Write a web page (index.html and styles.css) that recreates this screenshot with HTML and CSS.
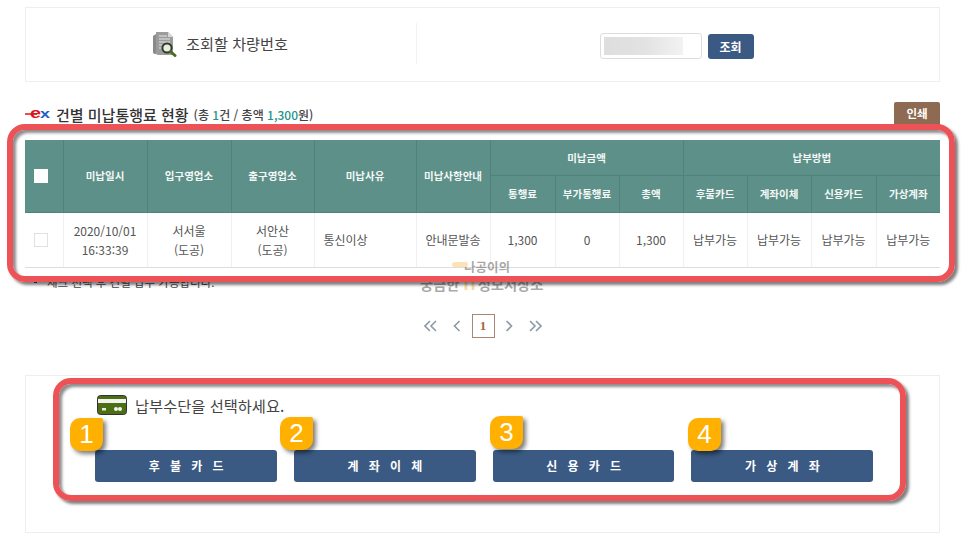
FILE: index.html
```html
<!DOCTYPE html>
<html lang="ko">
<head>
<meta charset="utf-8">
<title>미납통행료 조회</title>
<link rel="stylesheet" href="styles.css">
</head>
<body>
<main class="page">
  <section class="search">
    <div class="search-label">
      <svg class="doc-icon" width="26" height="26" viewBox="0 0 26 26">
        <path d="M1 5l3-2v20H3q-2 0-2-2z" fill="#8a8a8a"/>
        <path d="M4 1h12l5 5v18H6q-2 0-2-2z" fill="#9c9c9c"/>
        <path d="M16 1l5 5h-5z" fill="#d8d8d8"/>
        <path d="M7 5h8M7 8h11M7 11h11M7 14h4M7 17h3" stroke="#e4e4e4" stroke-width="1.2"/>
        <circle cx="15" cy="17" r="4.6" fill="#e8eee2" stroke="#2f3d2a" stroke-width="2"/>
        <path d="M18.5 20.5l4.5 4" stroke="#4a6b2a" stroke-width="3" stroke-linecap="round"/>
      </svg>
      <span>조회할 차량번호</span>
    </div>
    <div class="search-form">
      <div class="search-input"><div class="masked"></div></div>
      <button class="btn-search" type="button">조회</button>
    </div>
  </section>

  <div class="title-row">
    <h2 class="title">
      <svg class="ex-logo" width="25" height="14" viewBox="0 0 25 14">
        <path d="M0 7h12" stroke="#d8141c" stroke-width="1.5"/>
        <text x="5" y="11" class="ex-e" textLength="11" lengthAdjust="spacingAndGlyphs">e</text>
        <text x="15" y="11" class="ex-x" textLength="10" lengthAdjust="spacingAndGlyphs">x</text>
      </svg>
      <span>건별 미납통행료 현황</span>
      <small class="title-sub">(총 <em>1</em>건 / 총액 <em>1,300</em>원)</small>
    </h2>
    <button class="btn-print" type="button">인쇄</button>
  </div>

  <table class="grid">
    <colgroup>
      <col class="c38"><col class="c84"><col class="c84"><col class="c83"><col class="c102"><col class="c74">
      <col class="c65"><col class="c64"><col class="c64"><col class="c64"><col class="c64"><col class="c65"><col class="c64">
    </colgroup>
    <thead>
      <tr class="h1">
        <th rowspan="2"><span class="chk chk-head"></span></th>
        <th rowspan="2">미납일시</th>
        <th rowspan="2">입구영업소</th>
        <th rowspan="2">출구영업소</th>
        <th rowspan="2">미납사유</th>
        <th rowspan="2">미납사항안내</th>
        <th colspan="3">미납금액</th>
        <th colspan="4">납부방법</th>
      </tr>
      <tr class="h2">
        <th>통행료</th><th>부가통행료</th><th>총액</th>
        <th>후불카드</th><th>계좌이체</th><th>신용카드</th><th>가상계좌</th>
      </tr>
    </thead>
    <tbody>
      <tr>
        <td><span class="chk"></span></td>
        <td>2020/10/01<br>16:33:39</td>
        <td>서서울<br>(도공)</td>
        <td>서안산<br>(도공)</td>
        <td class="left">통신이상</td>
        <td>안내문발송</td>
        <td>1,300</td><td>0</td><td>1,300</td>
        <td>납부가능</td><td>납부가능</td><td>납부가능</td><td>납부가능</td>
      </tr>
    </tbody>
  </table>

  <p class="notice"><span class="dot"></span>체크 선택 후 건별 납부 가능합니다.</p>

  <nav class="pager">
    <a class="pg"><svg width="14" height="12" viewBox="0 0 14 12"><path d="M6 1L1 6l5 5M12 1L7 6l5 5"/></svg></a>
    <a class="pg"><svg width="8" height="12" viewBox="0 0 8 12"><path d="M6.5 1L1.5 6l5 5"/></svg></a>
    <a class="pg pg-on">1</a>
    <a class="pg"><svg width="8" height="12" viewBox="0 0 8 12"><path d="M1.5 1l5 5-5 5"/></svg></a>
    <a class="pg"><svg width="14" height="12" viewBox="0 0 14 12"><path d="M2 1l5 5-5 5M8 1l5 5-5 5"/></svg></a>
  </nav>

  <section class="pay">
    <div class="pay-head">
      <svg width="30" height="20" viewBox="0 0 30 20">
        <rect x=".5" y=".5" width="29" height="19" rx="3" fill="#4d6f14" stroke="#333"/>
        <rect x="1" y="4" width="28" height="4" fill="#f2f2f2"/>
        <rect x="5" y="13" width="4" height="2.5" fill="#e8e8e8"/>
        <circle cx="19" cy="14" r="2" fill="#f2f2f2"/><circle cx="23" cy="14" r="2" fill="#f2f2f2"/>
      </svg>
      <span>납부수단을 선택하세요.</span>
    </div>
    <div class="pay-btns">
      <button class="btn-pay" type="button">후 불 카 드</button>
      <button class="btn-pay" type="button">계 좌 이 체</button>
      <button class="btn-pay" type="button">신 용 카 드</button>
      <button class="btn-pay" type="button">가 상 계 좌</button>
    </div>
  </section>
</main>

<div class="marks">
  <div class="wm"><i class="wm-pill"></i><div class="wm-1">나공이의</div><div class="wm-2">궁금한 <b>IT</b>정보저장소</div></div>
  <div class="ring ring-a"></div>
  <div class="ring ring-b"></div>
  <div class="badge b1">1</div>
  <div class="badge b2">2</div>
  <div class="badge b3">3</div>
  <div class="badge b4">4</div>
</div>
</body>
</html>
```
FILE: styles.css
```css
* { box-sizing: border-box; }
html, body { margin: 0; padding: 0; background: #fff; }
body { font-family: "Noto Sans CJK KR", "Noto Sans", sans-serif; color: #444; overflow: hidden; height: 553px; position: relative; }
.page { width: 966px; padding: 7px 26px 0 25px; }

.search { display: flex; align-items: center; height: 75px; border: 1px solid #eee; }
.search-label { width: 391px; height: 41px; border-right: 1px solid #f2f2f2; display: flex; align-items: center; justify-content: center; gap: 8px; font-size: 15.2px; color: #444; margin-top: -3px; }
.doc-icon { margin: 1px 0 0 -2px; }
.search-form { flex: 1; display: flex; justify-content: center; align-items: center; gap: 6px; margin-top: 3px; padding-right: 3px; }
.search-input { width: 102px; height: 26px; border: 1px solid #ddd; border-radius: 3px; background: #fff; padding: 3px; }
.masked { width: 79px; height: 18px; background: linear-gradient(90deg, #dedede 0%, #e2e2e2 50%, #f2f2f2 100%); }
.btn-search { width: 46px; height: 25px; border: 0; border-radius: 3px; background: #3a5a83; color: #fff; font: 700 12px "Noto Sans CJK KR", sans-serif; padding: 0; }

.title-row { display: flex; justify-content: space-between; align-items: center; height: 24px; margin: 20px 0 14px; }
.title { margin: 0; font-size: 15px; font-weight: 500; color: #333; display: flex; align-items: center; }
.ex-logo { margin-right: 6px; overflow: visible; }
.ex-e { font: 700 14px "Liberation Sans", sans-serif; fill: #d8141c; }
.ex-x { font: 700 13px "Liberation Sans", sans-serif; fill: #1f5fc4; }
.title-sub { font-size: 12px; font-weight: 500; color: #444; margin-left: 5px; }
.title-sub em { font-style: normal; color: #21958a; }
.btn-print { width: 46px; height: 24px; border: 0; border-radius: 2px 2px 0 0; background: #8e6a52; color: #fff; font: 700 11.5px "Noto Sans CJK KR", sans-serif; padding: 0 0 2px; }

.grid { width: 915px; table-layout: fixed; border-collapse: collapse; font-size: 12px; color: #555; }
.c38 { width: 38px; } .c84 { width: 84px; } .c83 { width: 83px; } .c102 { width: 102px; } .c74 { width: 74px; } .c65 { width: 65px; } .c64 { width: 64px; }
.grid th { background: #5d9088; color: #f4f8f7; font-size: 10.5px; font-weight: 700; text-align: center; padding: 0; border: 1px solid #50827a; border-top: 0; }
.grid th:first-child { border-left: 0; }
.grid tr.h2 th:last-child, .grid tr.h1 th:last-child { border-right: 0; }
.h1 { height: 35px; }
.h2 { height: 37px; }
.grid td { height: 55px; padding: 0; text-align: center; line-height: 19px; border-right: 1px solid #f0f0f0; border-bottom: 1px solid #ddd; }
.grid td:last-child { border-right: 0; }
.grid td.left { text-align: left; padding-left: 9px; }
.chk { display: block; width: 14px; height: 14px; margin: 0 auto 0 9px; background: #fff; border: 1px solid #e2e2e2; }
.chk-head { border-color: #fff; }

.notice { margin: 5px 0 0; height: 18px; line-height: 18px; font-size: 11.5px; color: #444; display: flex; align-items: center; padding-left: 9px; }
.dot { width: 3px; height: 3px; background: #24467a; margin-right: 10px; }

.pager { display: flex; justify-content: center; gap: 3px; margin-top: 23px; padding-left: 1px; }
.pg { width: 23px; height: 24px; display: flex; align-items: center; justify-content: center; }
.pg svg { fill: none; stroke: #8c99a8; stroke-width: 1.6; }
.pg-on { border: 1px solid #a98672; font: 700 13px "Liberation Serif", serif; color: #a5683a; }

.pay { height: 158px; margin-top: 37px; border: 1px solid #eee; padding: 19px 0 0 69px; }
.pay-head { display: flex; align-items: center; gap: 8px; height: 20px; margin-left: 2px; font-size: 15.3px; color: #444; }
.pay-btns { display: flex; gap: 17px; width: 778px; margin-top: 35px; }
.btn-pay { flex: 1; height: 32px; border: 0; border-radius: 3px; background: #3a5a83; color: #fff; font: 700 12px "Noto Sans CJK KR", sans-serif; letter-spacing: 3.4px; padding: 0 0 0 4px; }

.marks { position: absolute; inset: 0; pointer-events: none; }
.ring { position: absolute; border: 6px solid #ec5256; border-radius: 18px; box-shadow: 3px 3px 3px rgba(0,0,0,.5), inset 3px 3px 3px rgba(0,0,0,.45); }
.ring-a { left: 7px; top: 124px; width: 948px; height: 158px; }
.ring-b { left: 53px; top: 378px; width: 853px; height: 123px; }
.badge { position: absolute; width: 33px; height: 33px; border-radius: 10px 2px 10px 10px; background: #ffb000; color: #fff; font: 400 26px/33px "Liberation Sans", sans-serif; text-align: center; box-shadow: 3px 3px 4px rgba(0,0,0,.5); }
.b1 { left: 70px; top: 418px; }
.b2 { left: 280px; top: 417px; }
.b3 { left: 490px; top: 416px; }
.b4 { left: 688px; top: 418px; }

.wm { position: absolute; left: 420px; top: 258px; width: 130px; height: 36px; color: rgba(110,110,110,.6); font-weight: 700; font-size: 14.3px; line-height: 17px; }
.wm-pill { position: absolute; left: 32px; top: 4px; width: 16px; height: 5px; border-radius: 3px; background: #fde3b4; }
.wm-1 { padding-left: 44px; font-size: 12.5px; }
.wm-2 { white-space: nowrap; }
.wm-2 b { color: #fcd9a0; }
```
